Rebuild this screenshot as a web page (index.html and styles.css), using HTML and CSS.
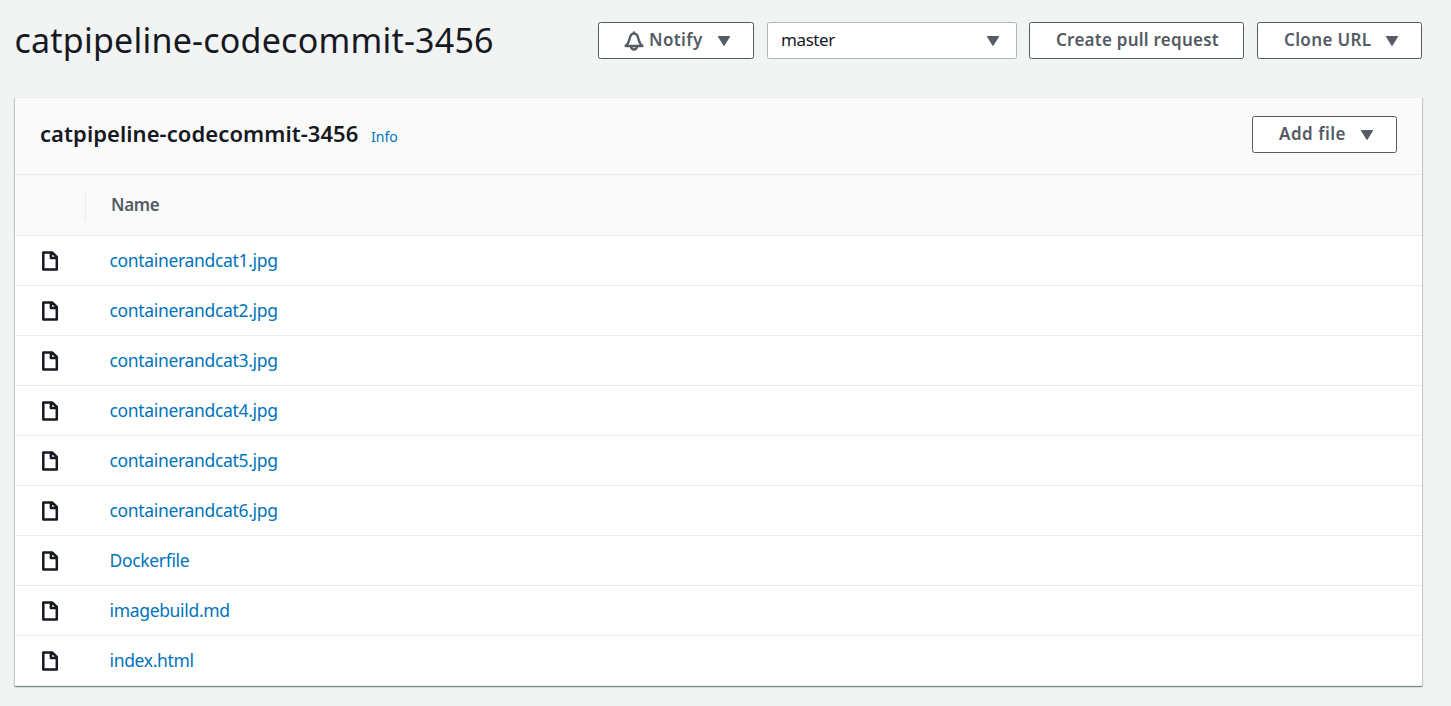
FILE: index.html
```html
<!DOCTYPE html>
<html lang="en">
<head>
<meta charset="utf-8">
<title>catpipeline-codecommit-3456</title>
<link rel="stylesheet" href="styles.css">
</head>
<body>
<svg class="sprite" aria-hidden="true">
  <symbol id="file" viewBox="0 0 20 20"><path d="M3.3 1.4h8.8L16.8 6v12.5H3.3z M10.9 1.8V7h5.500" fill="none" stroke="currentColor" stroke-width="2.5" stroke-linejoin="round"/></symbol>
  <symbol id="caret" viewBox="0 0 14 12"><path d="M1.3 1.500h11.400L7 10.600z" fill="currentColor" stroke="currentColor" stroke-linejoin="round"/></symbol>
</svg>
<header class="page-header">
  <h1 class="page-title">catpipeline-codecommit-3456</h1>
  <div class="actions">
    <button class="btn notify"><svg class="bell" viewBox="0 0 20 20"><path d="M10 .4v2M1.6 15h16.8c-2.2-1.8-3.2-3.5-3.7-6.2C14 5.2 13 2.500 10 2.500S6 5.200 5.300 8.800C4.800 11.500 3.800 13.200 1.600 15zM7 15.300a3 3.200 0 0 0 6 0" fill="none" stroke="currentColor" stroke-width="2.400" stroke-linejoin="round"/></svg><span class="notify-label">Notify</span><svg class="caret"><use href="#caret"/></svg></button>
    <button class="select"><span class="select-value">master</span><svg class="caret"><use href="#caret"/></svg></button>
    <button class="btn pull"><span class="pull-label">Create pull request</span></button>
    <button class="btn clone"><span class="clone-label">Clone URL</span><svg class="caret"><use href="#caret"/></svg></button>
  </div>
</header>
<main class="panel">
  <div class="panel-header">
    <h2 class="panel-title">catpipeline-codecommit-3456</h2>
    <a class="info">Info</a>
    <button class="btn add"><span class="add-label">Add file</span><svg class="caret"><use href="#caret"/></svg></button>
  </div>
  <div class="columns"><span class="divider"></span><span class="column-name">Name</span></div>
  <div class="row"><svg class="file"><use href="#file"/></svg><a class="link">containerandcat1.jpg</a></div>
  <div class="row"><svg class="file"><use href="#file"/></svg><a class="link">containerandcat2.jpg</a></div>
  <div class="row"><svg class="file"><use href="#file"/></svg><a class="link">containerandcat3.jpg</a></div>
  <div class="row"><svg class="file"><use href="#file"/></svg><a class="link">containerandcat4.jpg</a></div>
  <div class="row"><svg class="file"><use href="#file"/></svg><a class="link">containerandcat5.jpg</a></div>
  <div class="row"><svg class="file"><use href="#file"/></svg><a class="link">containerandcat6.jpg</a></div>
  <div class="row"><svg class="file"><use href="#file"/></svg><a class="link">Dockerfile</a></div>
  <div class="row"><svg class="file"><use href="#file"/></svg><a class="link">imagebuild.md</a></div>
  <div class="row"><svg class="file"><use href="#file"/></svg><a class="link">index.html</a></div>
</main>
</body>
</html>
```
FILE: styles.css
```css
* { box-sizing: border-box; }
body {
  margin: 0;
  height: 706px;
  padding: 22px 29px 0 15px;
  background: #f2f3f3;
  color: #16191f;
  font-family: "Noto Sans", "Open Sans", sans-serif;
  font-size: 17.5px;
  overflow: hidden;
}
.sprite { position: absolute; width: 0; height: 0; }
.page-header { display: flex; justify-content: space-between; height: 75px; }
.page-title {
  margin: 0 0 0 -.5px;
  font-size: 34px;
  line-height: 37px;
  font-weight: 400;
  letter-spacing: .22px;
  white-space: nowrap;
}
.actions { display: flex; }
.btn, .select {
  display: flex;
  align-items: center;
  height: 37px;
  padding: 0 0 3px 26px;
  background: #fff;
  border: 1px solid #545b64;
  border-radius: 2.5px;
  color: #545b64;
  font: 600 17px "Noto Sans", "Open Sans", sans-serif;
  letter-spacing: .25px;
  white-space: nowrap;
}
.caret { width: 14px; height: 12px; color: #545b64; margin: 3px 0 0; }
.notify { width: 156px; margin-right: 13px; padding-left: 25px; }
.bell { width: 20px; height: 20px; margin-right: 5px; margin-top: 4px; overflow: visible; }
.notify-label { width: 68px; text-align: left; letter-spacing: .4px; }
.select {
  width: 250px;
  margin-right: 12px;
  padding: 0 16px 3px 13px;
  justify-content: space-between;
  border-color: #aab7b8;
  color: #16191f;
  font-weight: 400;
}
.select-value { letter-spacing: -.4px; }
.pull { width: 215px; margin-right: 13px; }
.clone { width: 165px; }
.clone-label { width: 101px; text-align: left; letter-spacing: .35px; }
.add { width: 145px; margin-left: auto; }
.add-label { width: 81px; text-align: left; letter-spacing: .5px; }
.panel {
  width: 1407px;
  background: #fff;
  border-top: 1px solid #eaeded;
  box-shadow: 0 1px 1px 0 rgba(0, 28, 36, .3), 1px 1px 1px 0 rgba(0, 28, 36, .15), -1px 1px 1px 0 rgba(0, 28, 36, .15);
}
.panel-header {
  display: flex;
  align-items: center;
  height: 77px;
  padding: 0 25px 3px;
  background: #fafafa;
  border-bottom: 1px solid #eaeded;
}
.panel-title { margin: -4px 0 0; width: 331px; font-size: 22px; font-weight: 650; letter-spacing: .07px; white-space: nowrap; }
.info { margin-top: 3px; color: #0073bb; font-size: 14px; }
.columns {
  display: flex;
  align-items: center;
  height: 61px;
  padding-left: 70px;
  background: #fafafa;
  border-bottom: 1px solid #eaeded;
  color: #545b64;
  font-weight: 600;
}
.column-name { margin-top: -2px; font-size: 17px; letter-spacing: -.3px; }
.divider { width: 1px; height: 31px; margin-right: 25px; background: #eaeded; }
.row { display: flex; align-items: center; height: 50px; padding-left: 25px; border-bottom: 1px solid #eaeded; }
.file { width: 20px; height: 20px; margin-right: 50px; }
.link { margin: -1px 0 0 -.5px; color: #0073bb; letter-spacing: -.33px; }
```
